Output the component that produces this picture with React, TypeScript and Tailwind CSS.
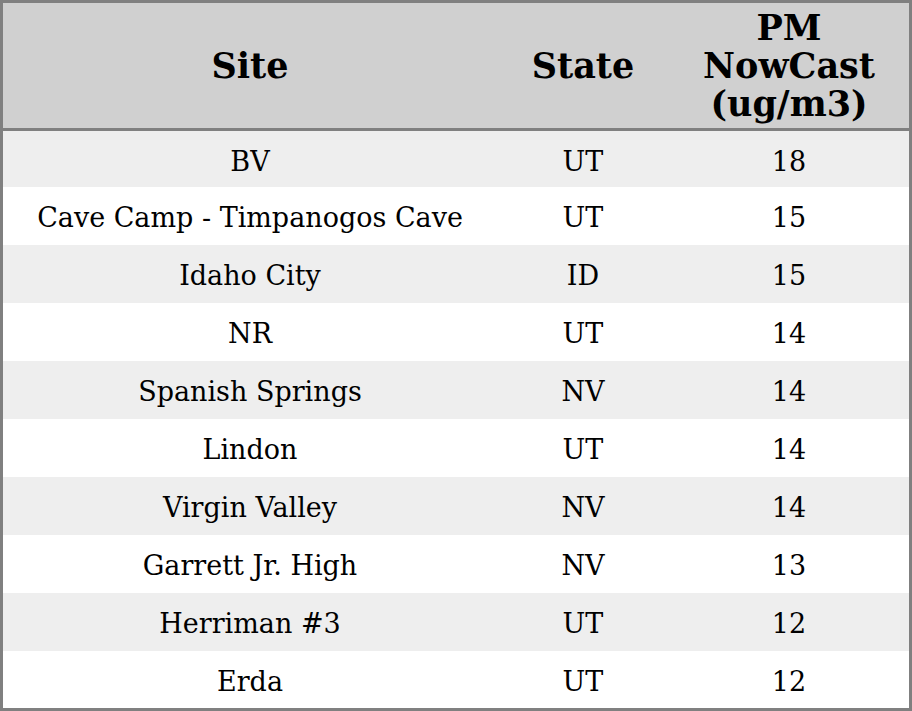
const rows = [
  { site: 'BV', state: 'UT', pm: 18 },
  { site: 'Cave Camp - Timpanogos Cave', state: 'UT', pm: 15 },
  { site: 'Idaho City', state: 'ID', pm: 15 },
  { site: 'NR', state: 'UT', pm: 14 },
  { site: 'Spanish Springs', state: 'NV', pm: 14 },
  { site: 'Lindon', state: 'UT', pm: 14 },
  { site: 'Virgin Valley', state: 'NV', pm: 14 },
  { site: 'Garrett Jr. High', state: 'NV', pm: 13 },
  { site: 'Herriman #3', state: 'UT', pm: 12 },
  { site: 'Erda', state: 'UT', pm: 12 },
]

export default function App() {
  return (
    <div className="w-[912px] h-[711px] bg-white" style={{ fontFamily: '"DejaVu Serif", serif' }}>
      <div className="border-[3px] border-[#808080] text-black">
        {/* Header */}
        <div className="grid grid-cols-[494px_172px_240px] h-[128px] bg-[#d0d0d0] border-b-[3px] border-[#808080] text-[35px] font-bold leading-[38px]">
          <div className="flex items-center justify-center">Site</div>
          <div className="flex items-center justify-center">State</div>
          <div className="flex flex-col items-center justify-center text-center">
            <span>PM</span>
            <span>NowCast</span>
            <span>(ug/m3)</span>
          </div>
        </div>

        {/* Rows */}
        {rows.map((r, i) => (
          <div
            key={r.site}
            className={
              'grid grid-cols-[494px_172px_240px] items-start pt-[11px] text-[27px] leading-normal ' +
              (i % 2 === 0 ? 'bg-[#eeeeee] ' : 'bg-white ') +
              (i === 0 ? 'h-[56px]' : i === rows.length - 1 ? 'h-[57px]' : 'h-[58px]')
            }
          >
            <div className="text-center">{r.site}</div>
            <div className="text-center">{r.state}</div>
            <div className="text-center">{r.pm}</div>
          </div>
        ))}
      </div>
    </div>
  )
}
